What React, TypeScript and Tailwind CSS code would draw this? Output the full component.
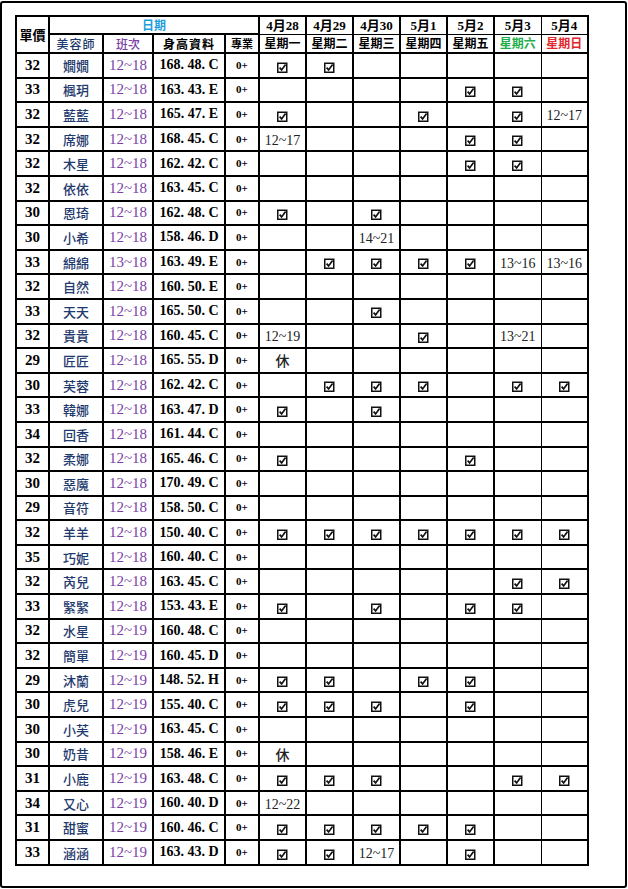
import React from 'react';

// 班表：每位美容師 4/28 ~ 5/4 的排班
const V = 'v';

type Row = [number, string, string, string, string[]];

const days = [
  { date: '4月28', week: '星期一', color: 'text-black' },
  { date: '4月29', week: '星期二', color: 'text-black' },
  { date: '4月30', week: '星期三', color: 'text-black' },
  { date: '5月1', week: '星期四', color: 'text-black' },
  { date: '5月2', week: '星期五', color: 'text-black' },
  { date: '5月3', week: '星期六', color: 'text-[#1fae4a]' },
  { date: '5月4', week: '星期日', color: 'text-[#e3262b]' },
];

const rows: Row[] = [
  [32, '嫺嫺', '12~18', '168. 48. C', [V, V, '', '', '', '', '']],
  [33, '楓玥', '12~18', '163. 43. E', ['', '', '', '', V, V, '']],
  [32, '藍藍', '12~18', '165. 47. E', [V, '', '', V, '', V, '12~17']],
  [32, '席娜', '12~18', '168. 45. C', ['12~17', '', '', '', V, V, '']],
  [32, '木星', '12~18', '162. 42. C', ['', '', '', '', V, V, '']],
  [32, '依依', '12~18', '163. 45. C', ['', '', '', '', '', '', '']],
  [30, '恩琦', '12~18', '162. 48. C', [V, '', V, '', '', '', '']],
  [30, '小希', '12~18', '158. 46. D', ['', '', '14~21', '', '', '', '']],
  [33, '綿綿', '13~18', '163. 49. E', ['', V, V, V, V, '13~16', '13~16']],
  [32, '自然', '12~18', '160. 50. E', ['', '', '', '', '', '', '']],
  [33, '天天', '12~18', '165. 50. C', ['', '', V, '', '', '', '']],
  [32, '貴貴', '12~18', '160. 45. C', ['12~19', '', '', V, '', '13~21', '']],
  [29, '匠匠', '12~18', '165. 55. D', ['休', '', '', '', '', '', '']],
  [30, '芙蓉', '12~18', '162. 42. C', ['', V, V, V, '', V, V]],
  [33, '韓娜', '12~18', '163. 47. D', [V, '', V, '', '', '', '']],
  [34, '回香', '12~18', '161. 44. C', ['', '', '', '', '', '', '']],
  [32, '柔娜', '12~18', '165. 46. C', [V, '', '', '', V, '', '']],
  [30, '惡魔', '12~18', '170. 49. C', ['', '', '', '', '', '', '']],
  [29, '音符', '12~18', '158. 50. C', ['', '', '', '', '', '', '']],
  [32, '羊羊', '12~18', '150. 40. C', [V, V, V, V, V, V, V]],
  [35, '巧妮', '12~18', '160. 40. C', ['', '', '', '', '', '', '']],
  [32, '芮兒', '12~18', '163. 45. C', ['', '', '', '', '', V, V]],
  [33, '緊緊', '12~18', '153. 43. E', [V, '', V, '', V, V, '']],
  [32, '水星', '12~19', '160. 48. C', ['', '', '', '', '', '', '']],
  [32, '簡單', '12~19', '160. 45. D', ['', '', '', '', '', '', '']],
  [29, '沐蘭', '12~19', '148. 52. H', [V, V, '', V, V, '', '']],
  [30, '虎兒', '12~19', '155. 40. C', [V, V, V, '', V, '', '']],
  [30, '小芙', '12~19', '163. 45. C', ['', '', '', '', '', '', '']],
  [30, '奶昔', '12~19', '158. 46. E', ['休', '', '', '', '', '', '']],
  [31, '小鹿', '12~19', '163. 48. C', [V, V, V, '', '', V, V]],
  [34, '又心', '12~19', '160. 40. D', ['12~22', '', '', '', '', '', '']],
  [31, '甜蜜', '12~19', '160. 46. C', [V, V, V, V, V, '', '']],
  [33, '涵涵', '12~19', '163. 43. D', [V, V, '12~17', '', V, '', '']],
];

const serif = "font-['Liberation_Serif','Noto_Sans_CJK_TC',serif]";
const cjk = "font-['Noto_Sans_CJK_TC','Liberation_Serif',sans-serif]";

// 5月3 / 5月4 之間是細線
const dayBorder = (i: number) => {
  if (i === 5) return 'border-y-2 border-l-2 border-r border-black';
  if (i === 6) return 'border-y-2 border-r-2 border-l border-black';
  return 'border-2 border-black';
};

const cell = 'border-2 border-black text-center p-0 leading-none';

const CheckBox = () => (
  <svg width="11" height="11" viewBox="0 0 11 11" className="inline-block align-middle">
    <rect x="0.75" y="1.25" width="9" height="9" fill="none" stroke="#111" strokeWidth="1.5" />
    <path d="M2.6 5.6 L4.6 7.9 L8.6 2.6" fill="none" stroke="#111" strokeWidth="1.7" />
  </svg>
);

const DayCell: React.FC<{ value: string; i: number }> = ({ value, i }) => (
  <td className={`${dayBorder(i)} text-center p-0 leading-none`}>
    {value === V ? (
      <CheckBox />
    ) : value === '休' ? (
      <span className={`${cjk} text-[14px] font-medium text-[#222]`}>{value}</span>
    ) : (
      <span className={`${serif} text-[14px] text-[#222]`}>{value}</span>
    )}
  </td>
);

export default function App() {
  return (
    <div className="w-[628px] h-[889px] bg-white pt-px">
      <div className="w-[627px] h-[887px] border-2 border-black rounded-[3px] pl-[13px] pt-[12px]">
        <table className="table-fixed border-collapse w-[572px]">
          <colgroup>
            <col className="w-[33px]" />
            <col className="w-[54px]" />
            <col className="w-[50px]" />
            <col className="w-[72px]" />
            <col className="w-[34px]" />
            {days.map((d) => (
              <col key={d.date} className="w-[47px]" />
            ))}
          </colgroup>
          <thead>
            <tr className="h-[18px]">
              <th rowSpan={2} className={`${cell} ${cjk} text-[13px] font-bold text-black`}>
                單價
              </th>
              <th colSpan={4} className={`${cell} ${cjk} text-[12px] font-bold text-[#1e9fdc]`}>
                日期
              </th>
              {days.map((d, i) => (
                <th
                  key={d.date}
                  className={`${dayBorder(i)} !border-b p-0 ${serif} text-[13px] font-bold leading-none text-black`}
                >
                  {d.date}
                </th>
              ))}
            </tr>
            <tr className="h-[19px]">
              <th className={`${cell} ${cjk} text-[12px] font-medium text-[#1f3a6e] tracking-[1px]`}>
                美容師
              </th>
              <th className={`${cell} ${cjk} text-[12px] font-medium text-[#7a3ea5]`}>
                班次
              </th>
              <th className={`${cell} ${cjk} text-[12px] font-bold text-black tracking-[1px]`}>
                身高資料
              </th>
              <th className={`${cell} ${cjk} text-[11px] font-bold text-black`}>
                專業
              </th>
              {days.map((d, i) => (
                <th
                  key={d.week}
                  className={`${dayBorder(i)} !border-t p-0 ${cjk} text-[12px] font-bold leading-none ${d.color}`}
                >
                  {d.week}
                </th>
              ))}
            </tr>
          </thead>
          <tbody>
            {rows.map(([price, name, shift, height, cells]) => (
              <tr key={name} className="h-[24.6px]">
                <td className={`${cell} ${serif} text-[15px] font-bold text-black`}>{price}</td>
                <td className={`${cell} ${cjk} text-[13px] font-medium text-[#1f3a6e]`}>{name}</td>
                <td className={`${cell} ${serif} text-[15px] text-[#7a3ea5]`}>{shift}</td>
                <td className={`${cell} ${serif} text-[14px] font-bold text-black whitespace-pre`}>{height}</td>
                <td className={`${cell} ${serif} text-[11px] font-bold text-black`}>0+</td>
                {cells.map((c, i) => (
                  <DayCell key={i} value={c} i={i} />
                ))}
              </tr>
            ))}
          </tbody>
        </table>
      </div>
    </div>
  );
}
